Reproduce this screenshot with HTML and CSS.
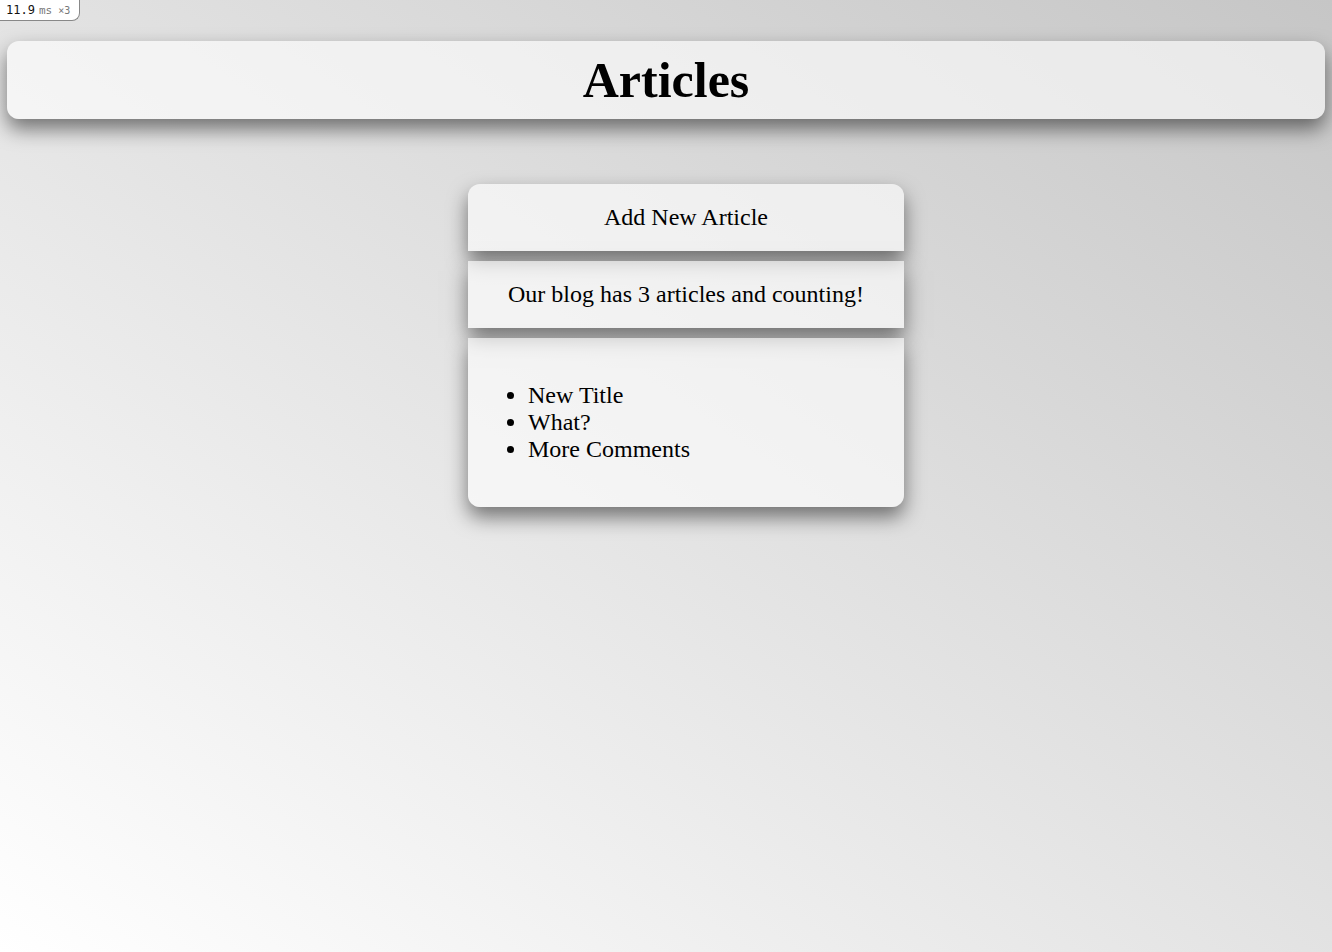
FILE: index.html
```html
<!DOCTYPE html>
<html>
<head>
<meta charset="utf-8">
<link rel="stylesheet" href="styles.css">
</head>
<body>
<div class="perf"><span class="perf-num">11.9</span><span class="perf-unit">ms</span><span class="perf-count">×3</span></div>
<header class="page-header"><h1 class="title">Articles</h1></header>
<main class="stack">
  <section class="card card-top"><p class="card-text">Add New Article</p></section>
  <section class="card"><p class="card-text">Our blog has 3 articles and counting!</p></section>
  <section class="card card-bottom">
    <ul class="list">
      <li>New Title</li>
      <li>What?</li>
      <li>More Comments</li>
    </ul>
  </section>
</main>
</body>
</html>
```
FILE: styles.css
```css
html {
  min-height: 100%;
  background: linear-gradient(to top right, #ffffff, #c6c6c6);
}
body {
  margin: 0;
  padding: 41px 7px 60px 7px;
  font-family: "Liberation Serif", serif;
  color: #000;
}
.perf {
  position: absolute;
  top: 0;
  left: 0;
  height: 21px;
  padding: 0 6px 0 6px;
  background: #fff;
  border: 1px solid #888;
  border-top: 0;
  border-left: 0;
  border-bottom-right-radius: 8px;
  font-family: "DejaVu Sans Mono", monospace;
  display: flex;
  align-items: center;
  gap: 4px;
  box-sizing: border-box;
  width: 80px;
}
.perf-num { font-size: 12px; color: #111; }
.perf-unit { font-size: 11px; color: #777; }
.perf-count { font-size: 10px; color: #777; margin-left: 2px; }
.page-header {
  height: 78px;
  border-radius: 12px;
  background: rgba(255, 255, 255, 0.6);
  box-shadow: 0 10px 20px rgba(0, 0, 0, 0.5);
  display: flex;
  align-items: center;
  justify-content: center;
}
.title {
  margin: 0;
  font-size: 50px;
  font-weight: bold;
  line-height: 1;
}
.stack {
  margin-top: 65px;
  padding-left: 40px;
  display: flex;
  flex-direction: column;
  align-items: center;
  gap: 10px;
}
.card {
  width: 436px;
  box-sizing: border-box;
  padding: 20px;
  background: rgba(255, 255, 255, 0.6);
  box-shadow: 0 10px 20px rgba(0, 0, 0, 0.5);
}
.card-top { border-radius: 12px 12px 0 0; }
.card-bottom { border-radius: 0 0 12px 12px; }
.card-text {
  margin: 0;
  font-size: 24px;
  line-height: 27px;
  text-align: center;
}
.list {
  margin: 24px 0;
  padding-left: 40px;
  font-size: 24px;
  line-height: 27px;
}
```
